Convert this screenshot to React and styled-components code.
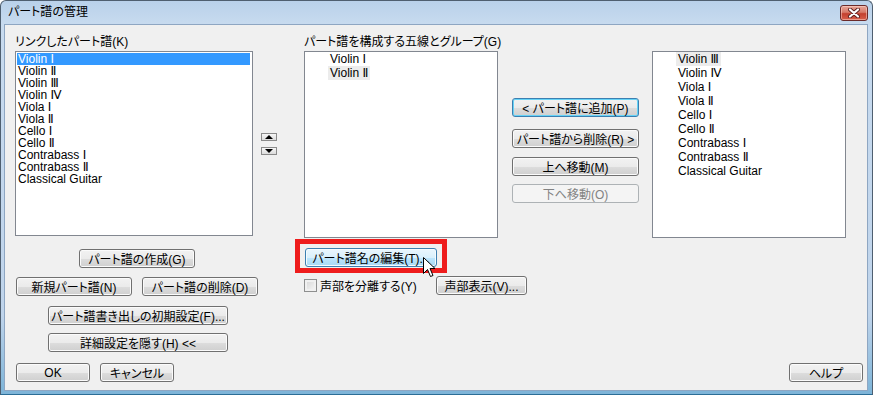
import React from 'react';
import styled, { createGlobalStyle, css } from 'styled-components';

const GlobalStyle = createGlobalStyle`
  html, body {
    margin: 0;
    padding: 0;
    background: #fff;
  }
  body {
    font-family: "Liberation Sans", "DejaVu Sans", "Noto Sans CJK JP", sans-serif;
    font-size: 12px;
    font-feature-settings: "palt" 1;
    color: #000;
  }
`;

const Window = styled.div`
  width: 873px;
  height: 395px;
  box-sizing: border-box;
  display: flex;
  flex-direction: column;
  background: linear-gradient(#b9d1ea, #c8dbef 24px, #bfd4eb 80%, #7db4d8);
  border: 1px solid #4f5f70;
  border-bottom-color: #2b6d96;
  border-radius: 6px 6px 0 0;
  overflow: hidden;
`;

const TitleBar = styled.div`
  height: 23px;
  flex: none;
  display: flex;
  justify-content: space-between;
  align-items: flex-start;
  padding: 0 4px 0 7px;
`;

const Title = styled.div`
  font-size: 12px;
  line-height: 23px;
  color: #000;
`;

const CloseButton = styled.div`
  margin-top: 4px;
  width: 28px;
  height: 16px;
  box-sizing: border-box;
  display: flex;
  align-items: center;
  justify-content: center;
  border: 1px solid #6b2a2a;
  border-radius: 3px;
  background: linear-gradient(#e8a699, #d77a69 45%, #c3402f 55%, #d8604c);
  box-shadow: inset 0 0 0 1px rgba(255, 220, 210, 0.5);
`;

const Client = styled.div`
  flex: 1;
  margin: 0 4px 3px 3px;
  border: 1px solid #8ea6c2;
  background: #f0f0f0;
  display: flex;
  flex-direction: column;
  padding: 11px 4px 8px 10px;
`;

const Main = styled.div`
  display: flex;
  align-items: flex-start;
`;

const Column = styled.div`
  flex: none;
  display: flex;
  flex-direction: column;
  align-items: flex-start;
  width: ${p => p.$width}px;
  margin-left: ${p => p.$left || 0}px;
  margin-top: ${p => p.$top || 0}px;
`;

const Label = styled.div`
  height: 12px;
  line-height: 12px;
  white-space: nowrap;
  margin-left: ${p => p.$indent || 0}px;
`;

const ListBox = styled.div`
  box-sizing: border-box;
  width: ${p => p.$width}px;
  height: ${p => p.$height}px;
  margin-top: ${p => p.$top ?? 3}px;
  margin-left: ${p => p.$indent || 0}px;
  background: #fff;
  border: 1px solid #828790;
  padding: ${p => (p.$tree ? '0' : '1px 2px 0 1px')};
`;

const ListItem = styled.div`
  height: 12px;
  line-height: 12px;
  padding-left: 1px;
  white-space: nowrap;
  ${p => p.$selected && css`
    background: #3399ff;
    color: #fff;
  `}
`;

const TreeItem = styled.div`
  width: fit-content;
  height: 14px;
  line-height: 14px;
  margin-left: 23px;
  padding: 0 2px;
  white-space: nowrap;
  background: ${p => (p.$hot ? '#ececec' : 'transparent')};
`;

const Button = styled.div`
  flex: none;
  box-sizing: border-box;
  width: ${p => p.$width}px;
  height: 19px;
  margin-top: ${p => p.$top || 0}px;
  margin-left: ${p => p.$left || 0}px;
  display: flex;
  align-items: center;
  justify-content: center;
  white-space: nowrap;
  border: 1px solid #707070;
  border-radius: 3px;
  background: linear-gradient(#f2f2f2, #ebebeb 50%, #dddddd 51%, #cfcfcf);
  box-shadow: inset 0 0 0 1px #fbfbfb;
  color: #000;
  ${p => p.$state === 'focus' && css`
    border-color: #3c7fb1;
    box-shadow: inset 0 0 0 1px #66d3f6;
  `}
  ${p => p.$state === 'hover' && css`
    border-color: #3c7fb1;
    background: linear-gradient(#eaf6fd, #d9f0fc 50%, #bee6fd 51%, #a7d9f5);
    box-shadow: inset 0 0 0 1px #f4fbfe;
  `}
  ${p => p.$state === 'disabled' && css`
    border-color: #adb2b5;
    background: #f4f4f4;
    box-shadow: none;
    color: #838383;
  `}
`;

const ButtonRow = styled.div`
  display: flex;
  margin-top: ${p => p.$top || 0}px;
`;

const SpinButton = styled.div`
  width: 16px;
  height: 8px;
  box-sizing: border-box;
  margin-top: ${p => p.$top || 0}px;
  display: flex;
  align-items: center;
  justify-content: center;
  border: 1px solid #8a8a8a;
  background: linear-gradient(#f6f6f6, #dcdcdc);
`;

const Highlight = styled.div`
  position: relative;
  margin-top: 1px;
  box-sizing: border-box;
  width: 152px;
  border: 5px solid #ee1c1c;
  padding: 4px 5px 1px 5px;
`;

const Cursor = styled.svg`
  position: absolute;
  left: 123px;
  top: 13px;
`;

const CheckRow = styled.div`
  display: flex;
  align-items: center;
  width: 223px;
  margin: 3px 0 0 9px;
`;

const CheckBox = styled.div`
  width: 13px;
  height: 13px;
  box-sizing: border-box;
  border: 1px solid #8e8f8f;
  background: linear-gradient(135deg, #d4d4d4, #f8f8f8);
  box-shadow: inset 0 0 0 2px #f0f0f0;
  margin-right: 3px;
`;

const Footer = styled.div`
  margin-top: auto;
  display: flex;
  align-items: center;
`;

const Spacer = styled.div`
  flex: 1;
`;

const linked = ['Violin Ⅰ', 'Violin Ⅱ', 'Violin Ⅲ', 'Violin Ⅳ', 'Viola Ⅰ', 'Viola Ⅱ', 'Cello Ⅰ', 'Cello Ⅱ', 'Contrabass Ⅰ', 'Contrabass Ⅱ', 'Classical Guitar'];
const members = ['Violin Ⅰ', 'Violin Ⅱ'];
const available = ['Violin Ⅲ', 'Violin Ⅳ', 'Viola Ⅰ', 'Viola Ⅱ', 'Cello Ⅰ', 'Cello Ⅱ', 'Contrabass Ⅰ', 'Contrabass Ⅱ', 'Classical Guitar'];

const Triangle = ({ down }) => (
  <svg width="8" height="4" viewBox="0 0 8 4">
    <polygon points={down ? '0,0 8,0 4,4' : '4,0 8,4 0,4'} fill="#000" />
  </svg>
);

const App = () => (
  <>
    <GlobalStyle />
    <Window>
      <TitleBar>
        <Title>パート譜の管理</Title>
        <CloseButton>
          <svg width="14" height="10" viewBox="0 0 14 10">
            <path d="M3 1.5 L11 8.5 M11 1.5 L3 8.5" stroke="#5a1e1e" strokeWidth="4" strokeLinecap="round" />
            <path d="M3 1.5 L11 8.5 M11 1.5 L3 8.5" stroke="#fff" strokeWidth="2.2" strokeLinecap="round" />
          </svg>
        </CloseButton>
      </TitleBar>
      <Client>
        <Main>
          <Column $width={243}>
            <Label>リンクしたパート譜(K)</Label>
            <ListBox $width={238} $height={185}>
              {linked.map((name, i) => (
                <ListItem key={name} $selected={i === 0}>{name}</ListItem>
              ))}
            </ListBox>
            <Button $width={116} $top={13} $left={64}>パート譜の作成(G)</Button>
            <ButtonRow $top={9}>
              <Button $width={116} $left={1}>新規パート譜(N)</Button>
              <Button $width={116} $left={10}>パート譜の削除(D)</Button>
            </ButtonRow>
            <Button $width={180} $top={10} $left={33}>パート譜書き出しの初期設定(F)...</Button>
            <Button $width={180} $top={8} $left={33}>詳細設定を隠す(H) &lt;&lt;</Button>
          </Column>

          <Column $width={16} $left={3} $top={97}>
            <SpinButton><Triangle /></SpinButton>
            <SpinButton $top={6}><Triangle down /></SpinButton>
          </Column>

          <Column $width={206} $left={18}>
            <Label $indent={9}>パート譜を構成する五線とグループ(G)</Label>
            <ListBox $width={194} $height={187} $indent={9} $tree>
              {members.map((name, i) => (
                <TreeItem key={name} $hot={i === 1}>{name}</TreeItem>
              ))}
            </ListBox>
            <Highlight>
              <Button $width={132} $state="hover">パート譜名の編集(T)...</Button>
              <Cursor width="13" height="21" viewBox="0 0 13 21">
                <polygon points="0.5,0.5 0.5,16.5 4.5,12.5 7.5,19.5 10,18.5 7,11.5 12,11.5" fill="#fff" stroke="#000" strokeWidth="1" />
              </Cursor>
            </Highlight>
            <CheckRow>
              <CheckBox />
              <span>声部を分離する(Y)</span>
              <Spacer />
              <Button $width={91}>声部表示(V)...</Button>
            </CheckRow>
          </Column>

          <Column $width={127} $left={11} $top={62}>
            <Button $width={127} $state="focus">&lt; パート譜に追加(P)</Button>
            <Button $width={127} $top={12}>パート譜から削除(R) &gt;</Button>
            <Button $width={127} $top={9}>上へ移動(M)</Button>
            <Button $width={127} $top={8} $state="disabled">下へ移動(O)</Button>
          </Column>

          <ListBox $width={194} $height={187} $indent={13} $top={15} $tree>
            {available.map((name, i) => (
              <TreeItem key={name} $hot={i === 0}>{name}</TreeItem>
            ))}
          </ListBox>
        </Main>

        <Footer>
          <Button $width={74} $left={1}>OK</Button>
          <Button $width={74} $left={10}>キャンセル</Button>
          <Spacer />
          <Button $width={74}>ヘルプ</Button>
        </Footer>
      </Client>
    </Window>
  </>
);

export default App;
